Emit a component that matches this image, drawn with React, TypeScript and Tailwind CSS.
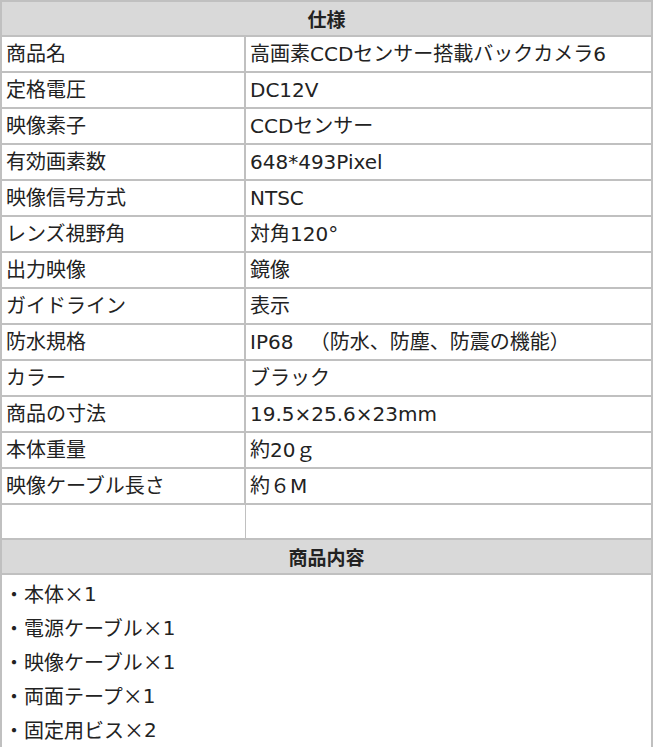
import React from "react";

const rows: [string, string][] = [
  ["商品名", "高画素CCDセンサー搭載バックカメラ6"],
  ["定格電圧", "DC12V"],
  ["映像素子", "CCDセンサー"],
  ["有効画素数", "648*493Pixel"],
  ["映像信号方式", "NTSC"],
  ["レンズ視野角", "対角120°"],
  ["出力映像", "鏡像"],
  ["ガイドライン", "表示"],
  ["防水規格", "IP68 　（防水、防塵、防震の機能）"],
  ["カラー", "ブラック"],
  ["商品の寸法", "19.5×25.6×23mm"],
  ["本体重量", "約20ｇ"],
  ["映像ケーブル長さ", "約６M"],
];

const items: [string, string][] = [
  ["本体", "1"],
  ["電源ケーブル", "1"],
  ["映像ケーブル", "1"],
  ["両面テープ", "1"],
  ["固定用ビス", "2"],
];

const cjk = { fontFamily: '"Noto Sans CJK JP", sans-serif' };

export default function App() {
  return (
    <div
      className="w-[653px] h-[747px] bg-white text-[#222222] text-[20px] leading-none"
      style={{ fontFamily: '"DejaVu Sans", "Noto Sans CJK JP", sans-serif' }}
    >
      <table className="w-[653px] border-collapse table-fixed">
        <colgroup>
          <col className="w-[244px]" />
          <col />
        </colgroup>
        <tbody>
          <tr className="h-[35px]">
            <td
              colSpan={2}
              className="border-2 border-[#c0c0c0] bg-[#d9d9d9] text-center font-bold text-[19px]"
              style={cjk}
            >
              仕様
            </td>
          </tr>
          {rows.map(([k, v]) => (
            <tr key={k} className="h-[36px]">
              <td className="border-2 border-[#c0c0c0] pl-[4px] whitespace-nowrap">{k}</td>
              <td className="border-2 border-[#c0c0c0] pl-[4px] whitespace-pre">{v}</td>
            </tr>
          ))}
          <tr className="h-[35px]">
            <td className="border-2 border-r border-[#c0c0c0]"></td>
            <td className="border-2 border-l border-[#c0c0c0] border-l-[#d4d4d4]"></td>
          </tr>
          <tr className="h-[35px]">
            <td
              colSpan={2}
              className="border-2 border-[#c0c0c0] bg-[#d9d9d9] text-center font-bold text-[19px]"
              style={cjk}
            >
              商品内容
            </td>
          </tr>
          <tr>
            <td colSpan={2} className="border-2 border-[#c0c0c0] pl-[2px] pt-[2px] pb-[1px]">
              <div className="flex flex-col">
                {items.map(([name, n]) => (
                  <div key={name} className="h-[34px] flex items-center whitespace-nowrap">
                    <span style={cjk}>・{name}×</span>
                    <span>{n}</span>
                  </div>
                ))}
              </div>
            </td>
          </tr>
        </tbody>
      </table>
    </div>
  );
}
